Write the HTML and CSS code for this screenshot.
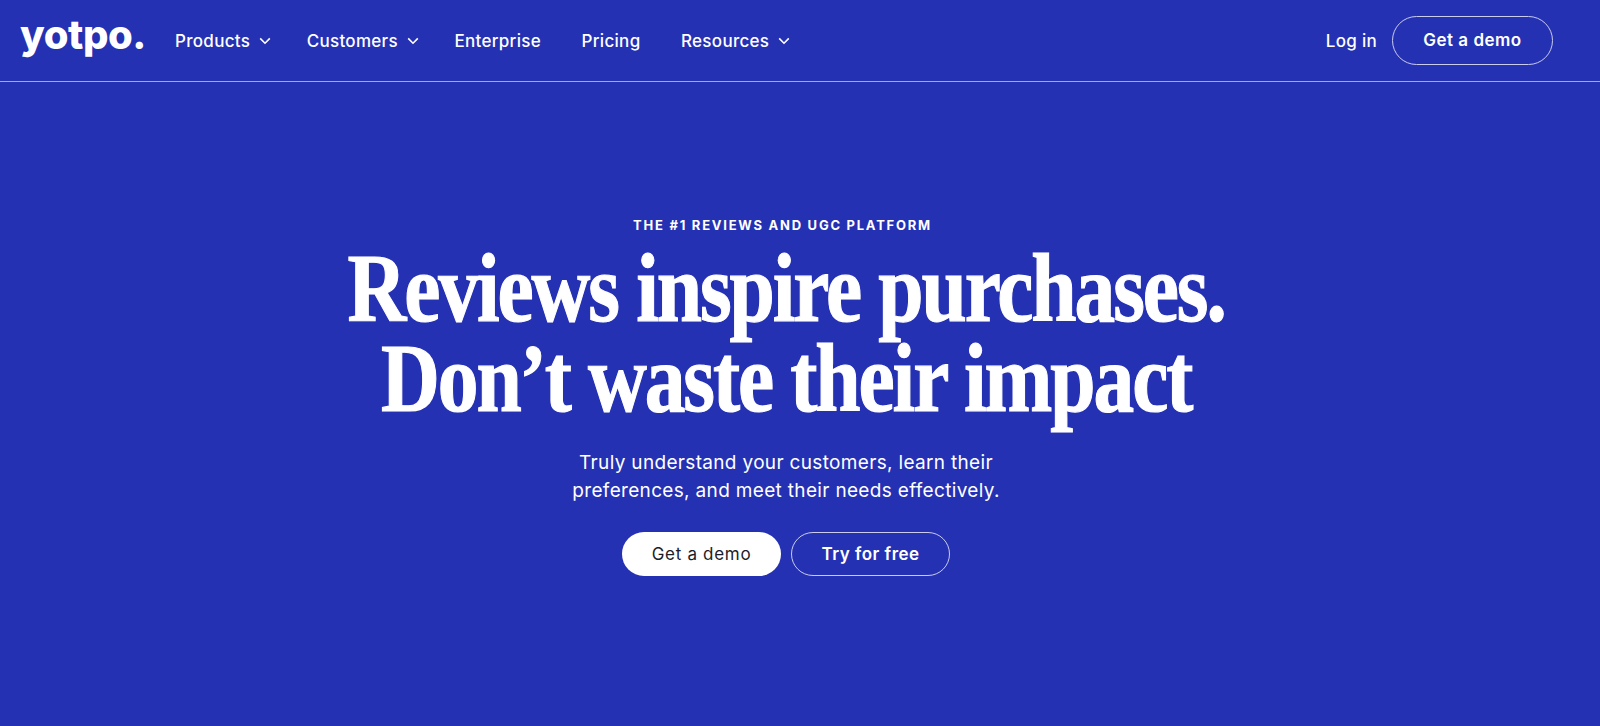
FILE: index.html
```html
<!DOCTYPE html>
<html lang="en">
<head>
<meta charset="utf-8">
<title>Yotpo</title>
<link rel="stylesheet" href="styles.css">
</head>
<body>
<header class="header">
  <a class="logo" href="#">yotpo.</a>
  <nav class="nav">
    <a class="nav-item has-chev" href="#">Products <svg class="chev" viewBox="0 0 12 8"><path d="M1.2 1.4 6 6.2l4.8-4.8"/></svg></a>
    <a class="nav-item has-chev" href="#">Customers <svg class="chev" viewBox="0 0 12 8"><path d="M1.2 1.4 6 6.2l4.8-4.8"/></svg></a>
    <a class="nav-item" href="#">Enterprise</a>
    <a class="nav-item" href="#">Pricing</a>
    <a class="nav-item has-chev" href="#">Resources <svg class="chev" viewBox="0 0 12 8"><path d="M1.2 1.4 6 6.2l4.8-4.8"/></svg></a>
  </nav>
  <div class="actions">
    <a class="nav-item" href="#">Log in</a>
    <a class="btn-head" href="#">Get a demo</a>
  </div>
</header>
<main class="hero">
  <p class="eyebrow">THE #1 REVIEWS AND UGC PLATFORM</p>
  <h1 class="title">Reviews inspire purchases.<br>Don’t waste their impact</h1>
  <p class="lead">Truly understand your customers, learn their<br>preferences, and meet their needs effectively.</p>
  <div class="cta">
    <a class="btn btn-solid" href="#">Get a demo</a>
    <a class="btn btn-line" href="#">Try for free</a>
  </div>
</main>
</body>
</html>
```
FILE: styles.css
```css
* { box-sizing: border-box; }
html, body { height: 100%; }
body {
  margin: 0;
  background: #2531b3;
  color: #fff;
  font-family: Inter, "Liberation Sans", sans-serif;
  overflow: hidden;
}
a { color: inherit; text-decoration: none; }
.header {
  height: 82px;
  display: flex;
  align-items: center;
  padding: 0 47px 1px 20px;
  border-bottom: 1px solid #a3a8e0;
}
.logo {
  font-family: Inter, sans-serif;
  font-weight: 800;
  font-size: 40px;
  line-height: 1;
  letter-spacing: -0.4px;
  width: 155px;
  margin-top: -11px;
  flex: none;
}
.nav { display: flex; align-items: center; gap: 40.5px; }
.nav-item {
  display: flex;
  align-items: center;
  gap: 9px;
  font-size: 17px;
  font-weight: 500;
  line-height: 24px;
  letter-spacing: 0.3px;
  margin-top: 1px;
}
.has-chev { margin-right: -5px; }
.chev { width: 12px; height: 8px; fill: none; stroke: #fff; stroke-width: 1.6; }
.actions { margin-left: auto; display: flex; align-items: center; gap: 15px; }
.btn-head {
  width: 161px;
  height: 49px;
  display: flex;
  align-items: center;
  justify-content: center;
  border: 1px solid #c9ccee;
  border-radius: 25px;
  font-size: 17px;
  font-weight: 600;
  letter-spacing: 0.5px;
}
.hero { display: flex; flex-direction: column; align-items: center; padding-top: 135px; padding-right: 28px; }
.eyebrow {
  margin: 0 7px 0 0;
  font-size: 13px;
  font-weight: 700;
  letter-spacing: 1.75px;
  line-height: 16px;
}
.title {
  margin: 11px 0 0;
  font-family: "Liberation Serif", serif;
  font-weight: 700;
  font-size: 97px;
  line-height: 90px;
  letter-spacing: -2.5px;
  text-align: center;
  transform: scaleX(0.84);
  -webkit-text-stroke: 1.2px #fff;
}
.lead {
  margin: 25px 0 0;
  font-size: 19px;
  line-height: 28px;
  letter-spacing: 0.33px;
  text-align: center;
}
.cta { margin-top: 27px; display: flex; gap: 10px; }
.btn {
  width: 159px;
  height: 44px;
  display: flex;
  align-items: center;
  justify-content: center;
  border-radius: 22px;
  font-size: 17px;
  font-weight: 600;
  letter-spacing: 0.5px;
}
.btn-solid { background: #fff; color: #1c1c2a; font-weight: 400; letter-spacing: 0.7px; }
.btn-line { border: 1px solid #c9ccee; }
```
